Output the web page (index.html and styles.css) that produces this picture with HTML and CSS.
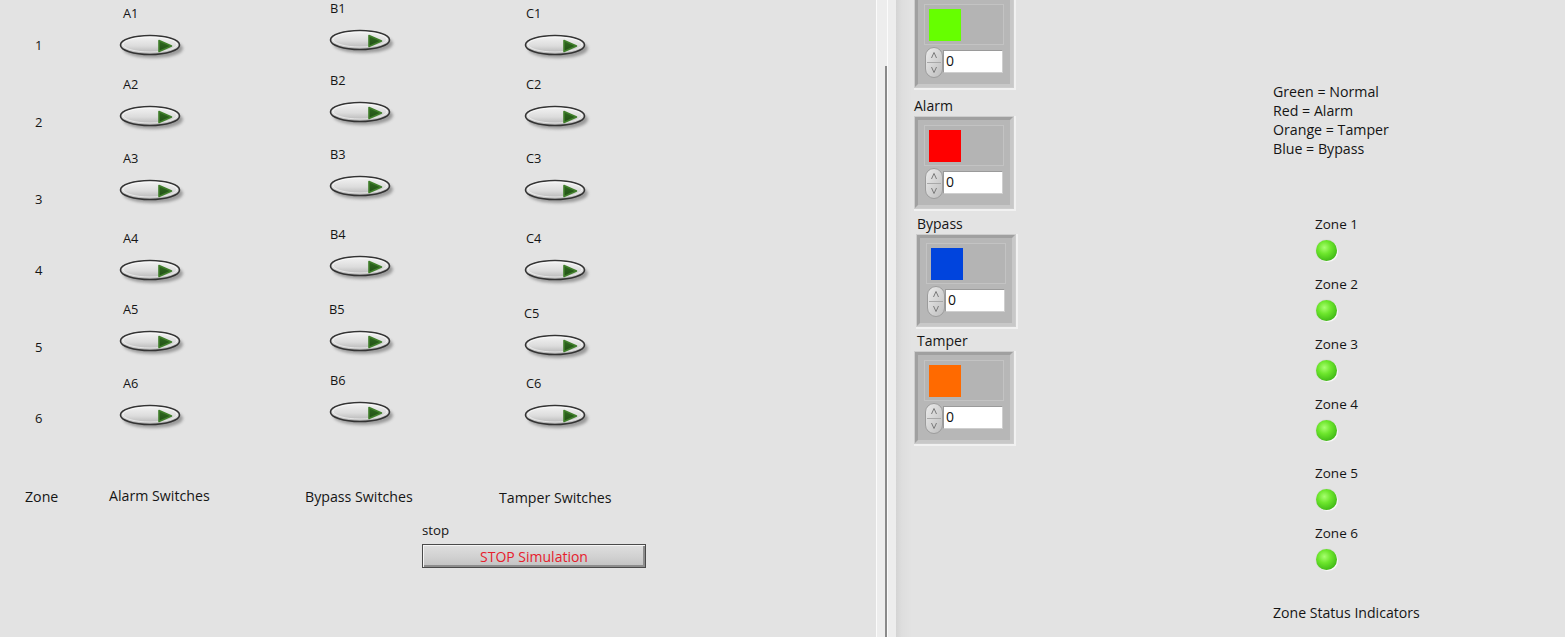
FILE: index.html
```html
<!DOCTYPE html>
<html>
<head>
<meta charset="utf-8">
<title>Zone Simulation</title>
<link rel="stylesheet" href="styles.css">
</head>
<body>
<svg class="defs" width="0" height="0" aria-hidden="true">
  <defs>
    <linearGradient id="swFill" x1="0" y1="0" x2="0" y2="1">
      <stop offset="0" stop-color="#f4f4f4"/>
      <stop offset=".55" stop-color="#dcdcdc"/>
      <stop offset="1" stop-color="#afafaf"/>
    </linearGradient>
    <linearGradient id="triFill" x1="0" y1="0" x2="0" y2="1">
      <stop offset="0" stop-color="#2f6a20"/>
      <stop offset="1" stop-color="#224f16"/>
    </linearGradient>
    <linearGradient id="spinFill" x1="0" y1="0" x2="1" y2="1">
      <stop offset="0" stop-color="#ececec"/>
      <stop offset="1" stop-color="#bdbdbd"/>
    </linearGradient>
    <filter id="swShadow" x="-30%" y="-60%" width="160%" height="220%">
      <feGaussianBlur stdDeviation="1.6"/>
    </filter>
  </defs>
</svg>

<main class="app">
  <section class="front">
    <div class="matrix">
      <div class="num r1">1</div>
      <div class="sw ca"><span class="swlabel">A1</span><svg class="toggle" viewBox="0 0 70 28" width="70" height="28"><ellipse cx="34" cy="14.5" rx="30" ry="9.5" fill="#6a6a6a" opacity=".6" filter="url(#swShadow)"/><ellipse cx="31" cy="11" rx="29.5" ry="9.5" fill="url(#swFill)" stroke="#333" stroke-width="1.6"/><ellipse cx="31" cy="10.5" rx="27" ry="7.5" fill="none" stroke="#fff" stroke-opacity=".6"/><path d="M40 6.5 L52.5 12 L40 17.5 Z" fill="url(#triFill)" stroke="#3f7e2a" stroke-width="1.6" stroke-linejoin="round"/></svg></div>
      <div class="sw cb b1"><span class="swlabel">B1</span><svg class="toggle" viewBox="0 0 70 28" width="70" height="28"><ellipse cx="34" cy="14.5" rx="30" ry="9.5" fill="#6a6a6a" opacity=".6" filter="url(#swShadow)"/><ellipse cx="31" cy="11" rx="29.5" ry="9.5" fill="url(#swFill)" stroke="#333" stroke-width="1.6"/><ellipse cx="31" cy="10.5" rx="27" ry="7.5" fill="none" stroke="#fff" stroke-opacity=".6"/><path d="M40 6.5 L52.5 12 L40 17.5 Z" fill="url(#triFill)" stroke="#3f7e2a" stroke-width="1.6" stroke-linejoin="round"/></svg></div>
      <div class="sw cc"><span class="swlabel">C1</span><svg class="toggle" viewBox="0 0 70 28" width="70" height="28"><ellipse cx="34" cy="14.5" rx="30" ry="9.5" fill="#6a6a6a" opacity=".6" filter="url(#swShadow)"/><ellipse cx="31" cy="11" rx="29.5" ry="9.5" fill="url(#swFill)" stroke="#333" stroke-width="1.6"/><ellipse cx="31" cy="10.5" rx="27" ry="7.5" fill="none" stroke="#fff" stroke-opacity=".6"/><path d="M40 6.5 L52.5 12 L40 17.5 Z" fill="url(#triFill)" stroke="#3f7e2a" stroke-width="1.6" stroke-linejoin="round"/></svg></div>

      <div class="num r2">2</div>
      <div class="sw ca"><span class="swlabel">A2</span><svg class="toggle" viewBox="0 0 70 28" width="70" height="28"><ellipse cx="34" cy="14.5" rx="30" ry="9.5" fill="#6a6a6a" opacity=".6" filter="url(#swShadow)"/><ellipse cx="31" cy="11" rx="29.5" ry="9.5" fill="url(#swFill)" stroke="#333" stroke-width="1.6"/><ellipse cx="31" cy="10.5" rx="27" ry="7.5" fill="none" stroke="#fff" stroke-opacity=".6"/><path d="M40 6.5 L52.5 12 L40 17.5 Z" fill="url(#triFill)" stroke="#3f7e2a" stroke-width="1.6" stroke-linejoin="round"/></svg></div>
      <div class="sw cb b2"><span class="swlabel">B2</span><svg class="toggle" viewBox="0 0 70 28" width="70" height="28"><ellipse cx="34" cy="14.5" rx="30" ry="9.5" fill="#6a6a6a" opacity=".6" filter="url(#swShadow)"/><ellipse cx="31" cy="11" rx="29.5" ry="9.5" fill="url(#swFill)" stroke="#333" stroke-width="1.6"/><ellipse cx="31" cy="10.5" rx="27" ry="7.5" fill="none" stroke="#fff" stroke-opacity=".6"/><path d="M40 6.5 L52.5 12 L40 17.5 Z" fill="url(#triFill)" stroke="#3f7e2a" stroke-width="1.6" stroke-linejoin="round"/></svg></div>
      <div class="sw cc"><span class="swlabel">C2</span><svg class="toggle" viewBox="0 0 70 28" width="70" height="28"><ellipse cx="34" cy="14.5" rx="30" ry="9.5" fill="#6a6a6a" opacity=".6" filter="url(#swShadow)"/><ellipse cx="31" cy="11" rx="29.5" ry="9.5" fill="url(#swFill)" stroke="#333" stroke-width="1.6"/><ellipse cx="31" cy="10.5" rx="27" ry="7.5" fill="none" stroke="#fff" stroke-opacity=".6"/><path d="M40 6.5 L52.5 12 L40 17.5 Z" fill="url(#triFill)" stroke="#3f7e2a" stroke-width="1.6" stroke-linejoin="round"/></svg></div>

      <div class="num r3">3</div>
      <div class="sw ca"><span class="swlabel">A3</span><svg class="toggle" viewBox="0 0 70 28" width="70" height="28"><ellipse cx="34" cy="14.5" rx="30" ry="9.5" fill="#6a6a6a" opacity=".6" filter="url(#swShadow)"/><ellipse cx="31" cy="11" rx="29.5" ry="9.5" fill="url(#swFill)" stroke="#333" stroke-width="1.6"/><ellipse cx="31" cy="10.5" rx="27" ry="7.5" fill="none" stroke="#fff" stroke-opacity=".6"/><path d="M40 6.5 L52.5 12 L40 17.5 Z" fill="url(#triFill)" stroke="#3f7e2a" stroke-width="1.6" stroke-linejoin="round"/></svg></div>
      <div class="sw cb b3"><span class="swlabel">B3</span><svg class="toggle" viewBox="0 0 70 28" width="70" height="28"><ellipse cx="34" cy="14.5" rx="30" ry="9.5" fill="#6a6a6a" opacity=".6" filter="url(#swShadow)"/><ellipse cx="31" cy="11" rx="29.5" ry="9.5" fill="url(#swFill)" stroke="#333" stroke-width="1.6"/><ellipse cx="31" cy="10.5" rx="27" ry="7.5" fill="none" stroke="#fff" stroke-opacity=".6"/><path d="M40 6.5 L52.5 12 L40 17.5 Z" fill="url(#triFill)" stroke="#3f7e2a" stroke-width="1.6" stroke-linejoin="round"/></svg></div>
      <div class="sw cc"><span class="swlabel">C3</span><svg class="toggle" viewBox="0 0 70 28" width="70" height="28"><ellipse cx="34" cy="14.5" rx="30" ry="9.5" fill="#6a6a6a" opacity=".6" filter="url(#swShadow)"/><ellipse cx="31" cy="11" rx="29.5" ry="9.5" fill="url(#swFill)" stroke="#333" stroke-width="1.6"/><ellipse cx="31" cy="10.5" rx="27" ry="7.5" fill="none" stroke="#fff" stroke-opacity=".6"/><path d="M40 6.5 L52.5 12 L40 17.5 Z" fill="url(#triFill)" stroke="#3f7e2a" stroke-width="1.6" stroke-linejoin="round"/></svg></div>

      <div class="num r4">4</div>
      <div class="sw ca"><span class="swlabel">A4</span><svg class="toggle" viewBox="0 0 70 28" width="70" height="28"><ellipse cx="34" cy="14.5" rx="30" ry="9.5" fill="#6a6a6a" opacity=".6" filter="url(#swShadow)"/><ellipse cx="31" cy="11" rx="29.5" ry="9.5" fill="url(#swFill)" stroke="#333" stroke-width="1.6"/><ellipse cx="31" cy="10.5" rx="27" ry="7.5" fill="none" stroke="#fff" stroke-opacity=".6"/><path d="M40 6.5 L52.5 12 L40 17.5 Z" fill="url(#triFill)" stroke="#3f7e2a" stroke-width="1.6" stroke-linejoin="round"/></svg></div>
      <div class="sw cb b4"><span class="swlabel">B4</span><svg class="toggle" viewBox="0 0 70 28" width="70" height="28"><ellipse cx="34" cy="14.5" rx="30" ry="9.5" fill="#6a6a6a" opacity=".6" filter="url(#swShadow)"/><ellipse cx="31" cy="11" rx="29.5" ry="9.5" fill="url(#swFill)" stroke="#333" stroke-width="1.6"/><ellipse cx="31" cy="10.5" rx="27" ry="7.5" fill="none" stroke="#fff" stroke-opacity=".6"/><path d="M40 6.5 L52.5 12 L40 17.5 Z" fill="url(#triFill)" stroke="#3f7e2a" stroke-width="1.6" stroke-linejoin="round"/></svg></div>
      <div class="sw cc"><span class="swlabel">C4</span><svg class="toggle" viewBox="0 0 70 28" width="70" height="28"><ellipse cx="34" cy="14.5" rx="30" ry="9.5" fill="#6a6a6a" opacity=".6" filter="url(#swShadow)"/><ellipse cx="31" cy="11" rx="29.5" ry="9.5" fill="url(#swFill)" stroke="#333" stroke-width="1.6"/><ellipse cx="31" cy="10.5" rx="27" ry="7.5" fill="none" stroke="#fff" stroke-opacity=".6"/><path d="M40 6.5 L52.5 12 L40 17.5 Z" fill="url(#triFill)" stroke="#3f7e2a" stroke-width="1.6" stroke-linejoin="round"/></svg></div>

      <div class="num r5">5</div>
      <div class="sw ca a5"><span class="swlabel">A5</span><svg class="toggle" viewBox="0 0 70 28" width="70" height="28"><ellipse cx="34" cy="14.5" rx="30" ry="9.5" fill="#6a6a6a" opacity=".6" filter="url(#swShadow)"/><ellipse cx="31" cy="11" rx="29.5" ry="9.5" fill="url(#swFill)" stroke="#333" stroke-width="1.6"/><ellipse cx="31" cy="10.5" rx="27" ry="7.5" fill="none" stroke="#fff" stroke-opacity=".6"/><path d="M40 6.5 L52.5 12 L40 17.5 Z" fill="url(#triFill)" stroke="#3f7e2a" stroke-width="1.6" stroke-linejoin="round"/></svg></div>
      <div class="sw cb b5"><span class="swlabel">B5</span><svg class="toggle" viewBox="0 0 70 28" width="70" height="28"><ellipse cx="34" cy="14.5" rx="30" ry="9.5" fill="#6a6a6a" opacity=".6" filter="url(#swShadow)"/><ellipse cx="31" cy="11" rx="29.5" ry="9.5" fill="url(#swFill)" stroke="#333" stroke-width="1.6"/><ellipse cx="31" cy="10.5" rx="27" ry="7.5" fill="none" stroke="#fff" stroke-opacity=".6"/><path d="M40 6.5 L52.5 12 L40 17.5 Z" fill="url(#triFill)" stroke="#3f7e2a" stroke-width="1.6" stroke-linejoin="round"/></svg></div>
      <div class="sw cc c5"><span class="swlabel">C5</span><svg class="toggle" viewBox="0 0 70 28" width="70" height="28"><ellipse cx="34" cy="14.5" rx="30" ry="9.5" fill="#6a6a6a" opacity=".6" filter="url(#swShadow)"/><ellipse cx="31" cy="11" rx="29.5" ry="9.5" fill="url(#swFill)" stroke="#333" stroke-width="1.6"/><ellipse cx="31" cy="10.5" rx="27" ry="7.5" fill="none" stroke="#fff" stroke-opacity=".6"/><path d="M40 6.5 L52.5 12 L40 17.5 Z" fill="url(#triFill)" stroke="#3f7e2a" stroke-width="1.6" stroke-linejoin="round"/></svg></div>

      <div class="num r6">6</div>
      <div class="sw ca"><span class="swlabel">A6</span><svg class="toggle" viewBox="0 0 70 28" width="70" height="28"><ellipse cx="34" cy="14.5" rx="30" ry="9.5" fill="#6a6a6a" opacity=".6" filter="url(#swShadow)"/><ellipse cx="31" cy="11" rx="29.5" ry="9.5" fill="url(#swFill)" stroke="#333" stroke-width="1.6"/><ellipse cx="31" cy="10.5" rx="27" ry="7.5" fill="none" stroke="#fff" stroke-opacity=".6"/><path d="M40 6.5 L52.5 12 L40 17.5 Z" fill="url(#triFill)" stroke="#3f7e2a" stroke-width="1.6" stroke-linejoin="round"/></svg></div>
      <div class="sw cb b6"><span class="swlabel">B6</span><svg class="toggle" viewBox="0 0 70 28" width="70" height="28"><ellipse cx="34" cy="14.5" rx="30" ry="9.5" fill="#6a6a6a" opacity=".6" filter="url(#swShadow)"/><ellipse cx="31" cy="11" rx="29.5" ry="9.5" fill="url(#swFill)" stroke="#333" stroke-width="1.6"/><ellipse cx="31" cy="10.5" rx="27" ry="7.5" fill="none" stroke="#fff" stroke-opacity=".6"/><path d="M40 6.5 L52.5 12 L40 17.5 Z" fill="url(#triFill)" stroke="#3f7e2a" stroke-width="1.6" stroke-linejoin="round"/></svg></div>
      <div class="sw cc"><span class="swlabel">C6</span><svg class="toggle" viewBox="0 0 70 28" width="70" height="28"><ellipse cx="34" cy="14.5" rx="30" ry="9.5" fill="#6a6a6a" opacity=".6" filter="url(#swShadow)"/><ellipse cx="31" cy="11" rx="29.5" ry="9.5" fill="url(#swFill)" stroke="#333" stroke-width="1.6"/><ellipse cx="31" cy="10.5" rx="27" ry="7.5" fill="none" stroke="#fff" stroke-opacity=".6"/><path d="M40 6.5 L52.5 12 L40 17.5 Z" fill="url(#triFill)" stroke="#3f7e2a" stroke-width="1.6" stroke-linejoin="round"/></svg></div>
    </div>

    <div class="captions">
      <span class="cap cap-zone">Zone</span>
      <span class="cap cap-alarm">Alarm Switches</span>
      <span class="cap cap-bypass">Bypass Switches</span>
      <span class="cap cap-tamper">Tamper Switches</span>
    </div>

    <div class="stop">
      <span class="stop-label">stop</span>
      <button class="stop-btn" type="button">STOP Simulation</button>
    </div>
  </section>

  <div class="splitter">
    <div class="sp-edge"></div>
    <div class="sp-face"></div>
    <div class="sp-grip"><div class="sp-line"></div></div>
    <div class="sp-edge"></div>
    <div class="sp-face"></div>
  </div>

  <section class="panel">
    <div class="boxes">
      <div class="cbox first">
        <div class="cpanel"><div class="swatch green"></div></div>
        <div class="numrow"><svg class="spin" viewBox="0 0 18 31" width="18" height="31"><rect x=".5" y=".5" width="17" height="30" rx="8.5" fill="url(#spinFill)" stroke="#9c9c9c"/><line x1="2" y1="15.5" x2="16" y2="15.5" stroke="#a8a8a8"/><path d="M6.5 11 L9 5.5 L11.5 11" fill="none" stroke="#7a7a7a"/><path d="M6.5 20 L9 25.5 L11.5 20" fill="none" stroke="#7a7a7a"/></svg><div class="field">0</div></div>
      </div>

      <div class="boxlabel l-alarm">Alarm</div>
      <div class="cbox">
        <div class="cpanel"><div class="swatch red"></div></div>
        <div class="numrow"><svg class="spin" viewBox="0 0 18 31" width="18" height="31"><rect x=".5" y=".5" width="17" height="30" rx="8.5" fill="url(#spinFill)" stroke="#9c9c9c"/><line x1="2" y1="15.5" x2="16" y2="15.5" stroke="#a8a8a8"/><path d="M6.5 11 L9 5.5 L11.5 11" fill="none" stroke="#7a7a7a"/><path d="M6.5 20 L9 25.5 L11.5 20" fill="none" stroke="#7a7a7a"/></svg><div class="field">0</div></div>
      </div>

      <div class="boxlabel l-bypass">Bypass</div>
      <div class="cbox shifted">
        <div class="cpanel"><div class="swatch blue"></div></div>
        <div class="numrow"><svg class="spin" viewBox="0 0 18 31" width="18" height="31"><rect x=".5" y=".5" width="17" height="30" rx="8.5" fill="url(#spinFill)" stroke="#9c9c9c"/><line x1="2" y1="15.5" x2="16" y2="15.5" stroke="#a8a8a8"/><path d="M6.5 11 L9 5.5 L11.5 11" fill="none" stroke="#7a7a7a"/><path d="M6.5 20 L9 25.5 L11.5 20" fill="none" stroke="#7a7a7a"/></svg><div class="field">0</div></div>
      </div>

      <div class="boxlabel l-tamper">Tamper</div>
      <div class="cbox">
        <div class="cpanel"><div class="swatch orange"></div></div>
        <div class="numrow"><svg class="spin" viewBox="0 0 18 31" width="18" height="31"><rect x=".5" y=".5" width="17" height="30" rx="8.5" fill="url(#spinFill)" stroke="#9c9c9c"/><line x1="2" y1="15.5" x2="16" y2="15.5" stroke="#a8a8a8"/><path d="M6.5 11 L9 5.5 L11.5 11" fill="none" stroke="#7a7a7a"/><path d="M6.5 20 L9 25.5 L11.5 20" fill="none" stroke="#7a7a7a"/></svg><div class="field">0</div></div>
      </div>
    </div>

    <div class="status">
      <div class="legend">
        <div>Green = Normal</div>
        <div>Red = Alarm</div>
        <div>Orange = Tamper</div>
        <div>Blue = Bypass</div>
      </div>
      <ul class="zones">
        <li class="zone"><span class="zone-label">Zone 1</span><span class="led"></span></li>
        <li class="zone"><span class="zone-label">Zone 2</span><span class="led"></span></li>
        <li class="zone"><span class="zone-label">Zone 3</span><span class="led"></span></li>
        <li class="zone z4"><span class="zone-label">Zone 4</span><span class="led"></span></li>
        <li class="zone"><span class="zone-label">Zone 5</span><span class="led"></span></li>
        <li class="zone"><span class="zone-label">Zone 6</span><span class="led"></span></li>
      </ul>
      <div class="status-title">Zone Status Indicators</div>
    </div>
  </section>
</main>
</body>
</html>
```

FILE: styles.css
```css
html, body {
  margin: 0;
  padding: 0;
}

body {
  width: 1565px;
  height: 637px;
  overflow: hidden;
  background: #e3e3e3;
  font-family: "Open Sans", "Noto Sans", "Liberation Sans", sans-serif;
  color: #151515;
}

.defs {
  position: absolute;
  width: 0;
  height: 0;
  overflow: hidden;
}

.app {
  display: flex;
  height: 637px;
}

/* ---------- left front panel ---------- */
.front {
  width: 876px;
  flex: none;
  background: #e3e3e3;
}

.matrix {
  display: grid;
  grid-template-columns: 119px 210px 195px 1fr;
  grid-template-rows: 71px 74px 80px 71px 74px 114px;
  padding-top: 5px;
}

.num {
  padding-left: 35px;
  font-size: 13px;
  line-height: 16px;
}
.num.r1 { margin-top: 32px; }
.num.r2 { margin-top: 38px; }
.num.r3 { margin-top: 41px; }
.num.r4 { margin-top: 32px; }
.num.r5 { margin-top: 38px; }
.num.r6 { margin-top: 35px; }

.sw {
  display: flex;
  flex-direction: column;
  align-items: flex-start;
}

.swlabel {
  font-size: 12.8px;
  line-height: 16px;
}

.ca .swlabel { padding-left: 4px; }
.cb .swlabel { padding-left: 1px; }
.cc .swlabel { padding-left: 2px; }

.toggle {
  display: block;
  margin-top: 13px;
}

.b1 { margin-top: -5px; }
.b2, .b3, .b4 { margin-top: -4px; }
.b6 { margin-top: -3px; }
.c5 { margin-top: 4px; }
.c5 .swlabel { padding-left: 0; }
.b5 .swlabel { padding-left: 0; }

.captions {
  display: flex;
  padding-left: 25px;
  font-size: 14.2px;
  line-height: 16px;
}
.cap-zone { width: 84px; }
.cap-alarm { width: 196px; margin-top: -1px; }
.cap-bypass { width: 194px; }
.cap-tamper { margin-top: 1px; }

.stop {
  display: flex;
  flex-direction: column;
  align-items: flex-start;
  padding-left: 422px;
  margin-top: 16px;
}

.stop-label {
  font-size: 13.3px;
  line-height: 16px;
}

.stop-btn {
  margin-top: 6px;
  width: 224px;
  height: 24px;
  box-sizing: border-box;
  padding: 0;
  border: 1px solid #4a4a4a;
  background: linear-gradient(to bottom, #dfdfdf 0%, #d2d2d2 50%, #c2c2c2 100%);
  box-shadow: inset 1px 1px 0 #f6f6f6, inset -2px -2px 0 #8d8d8d;
  color: #e6202c;
  font-family: "Open Sans", "Noto Sans", "Liberation Sans", sans-serif;
  font-size: 14px;
  line-height: 21px;
  text-align: center;
}

/* ---------- splitter ---------- */
.splitter {
  display: flex;
  width: 20px;
  flex: none;
}
.sp-edge { width: 1px; background: #fbfbfb; }
.sp-face { width: 8px; background: #ededed; }
.sp-grip { width: 2px; background: #ededed; }
.sp-line {
  margin-top: 66px;
  height: 571px;
  background: #8a8a8a;
}

/* ---------- right panel ---------- */
.panel {
  flex: 1;
  display: flex;
  padding-left: 19px;
  background: linear-gradient(to right, #d4d4d4 0, #dedede 6px, #e3e3e3 16px);
}

.boxes {
  width: 358px;
  flex: none;
  display: flex;
  flex-direction: column;
  align-items: flex-start;
}

.boxlabel {
  font-size: 14px;
  line-height: 16px;
}
.l-alarm { margin-top: 11px; margin-left: -1px; }
.l-bypass { margin-top: 8px; margin-left: 2px; }
.l-tamper { margin-top: 7px; margin-left: 2px; }

.cbox {
  width: 98px;
  height: 91px;
  box-sizing: border-box;
  margin-top: 3px;
  background: #b7b7b7;
  border: 3px solid;
  border-color: #a0a0a0 #c8c8c8 #c8c8c8 #a0a0a0;
  box-shadow: 0 0 0 1px #cdcdcd, 1px 1px 0 2px #f1f1f1;
}
.cbox.first { margin-top: -4px; }
.cbox.shifted { margin-left: 2px; }

.cpanel {
  width: 80px;
  height: 41px;
  box-sizing: border-box;
  margin: 5px 0 0 6px;
  padding: 4px 0 0 4px;
  border: 1px solid #c3c3c3;
  background: #b4b4b4;
}

.swatch {
  width: 32px;
  height: 32px;
}
.green { background: #66ff00; }
.red { background: #ff0000; }
.blue { background: #0044dd; }
.orange { background: #ff6a00; }

.numrow {
  display: flex;
  align-items: flex-start;
  margin: 2px 0 0 7px;
}

.spin { display: block; }

.field {
  margin-top: 3px;
  width: 60px;
  height: 23px;
  box-sizing: border-box;
  background: #fff;
  border: 1px solid #cfcfcf;
  border-top-color: #9a9a9a;
  border-left-color: #9a9a9a;
  padding-left: 2px;
  font-size: 14px;
  line-height: 20px;
  color: #111;
}

.status {
  display: flex;
  flex-direction: column;
  align-items: flex-start;
}

.legend {
  margin-top: 82px;
  font-size: 14.2px;
  line-height: 19px;
}

.zones {
  list-style: none;
  margin: 58px 0 0 42px;
  padding: 0;
}

.zone {
  display: flex;
  flex-direction: column;
  align-items: flex-start;
  margin-bottom: 15px;
}
.zone.z4 { margin-bottom: 24px; }
.zone:last-child { margin-bottom: 0; }

.zone-label {
  font-size: 13.5px;
  line-height: 16px;
}

.led {
  display: block;
  margin: 8px 0 0 1px;
  width: 21px;
  height: 21px;
  border-radius: 50%;
  background: radial-gradient(circle at 40% 36%, #a8ff70 0, #6de62c 35%, #47c01a 70%, #2f8d12 100%);
  box-shadow: 1px 1px 1px rgba(255, 255, 255, 0.95), 0 0 1px rgba(0, 0, 0, 0.25);
}

.status-title {
  margin-top: 35px;
  font-size: 14.1px;
  line-height: 16px;
}
```
